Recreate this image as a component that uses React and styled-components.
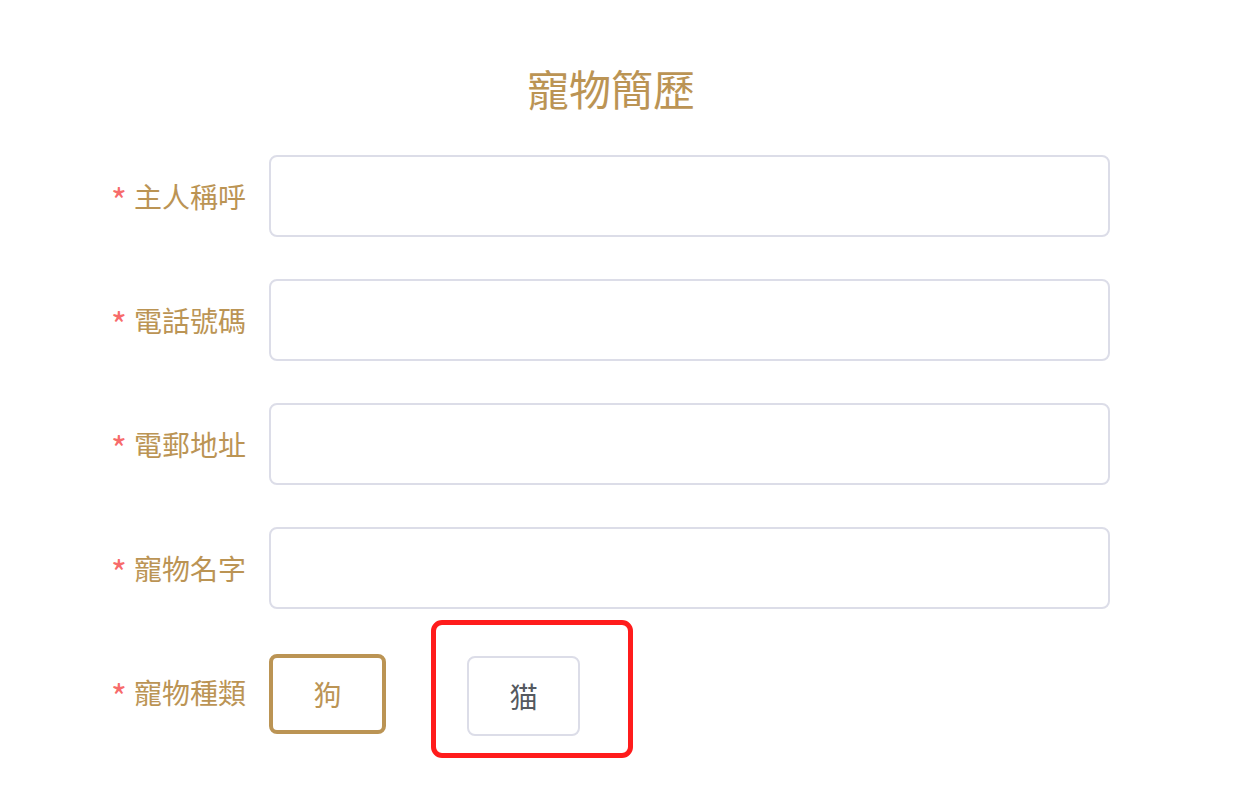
import styled, { createGlobalStyle } from 'styled-components';

const GlobalStyle = createGlobalStyle`
body{
    margin:0;
    background:#ffffff;
    font-family:"Noto Sans CJK TC","Noto Sans",sans-serif;
}
`;

const Page = styled.main`
width:1222px;
min-height:100vh;
box-sizing:border-box;
padding-top:60px;
padding-bottom:40px;
`;

const Title = styled.h1`
margin:0 0 39px 0;
text-align:center;
font-size:42px;
line-height:56px;
font-weight:400;
color:#bb9454;
`;

const Form = styled.form`
display:flex;
flex-direction:column;
gap:42px;
`;

const Row = styled.div`
display:flex;
align-items:${props => props.$top ? 'flex-start' : 'center'};
`;

const Label = styled.label`
width:269px;
height:82px;
box-sizing:border-box;
padding-right:23px;
text-align:right;
font-size:28px;
line-height:82px;
color:#bb9454;
`;

const Star = styled.span`
color:#f76b6b;
font-size:34px;
line-height:0;
vertical-align:-6px;
margin-right:7px;
`;

const Input = styled.input`
width:841px;
height:82px;
box-sizing:border-box;
border:2px solid #dcdde8;
border-radius:8px;
background:#ffffff;
outline:none;
font-size:28px;
padding:0 30px;
`;

const Options = styled.div`
display:flex;
align-items:flex-start;
gap:81px;
`;

const Choice = styled.button`
box-sizing:border-box;
width:${props => props.$active ? '117px' : '113px'};
height:80px;
margin-top:${props => props.$active ? '3px' : '5px'};
border:${props => props.$active ? '4px solid #bb9454' : '2px solid #dcdde8'};
border-radius:8px;
background:#ffffff;
font-family:inherit;
font-size:28px;
color:${props => props.$active ? '#bb9454' : '#55595f'};
cursor:pointer;
`;

const Marked = styled.div`
position:relative;
display:flex;
`;

const Highlight = styled.div`
position:absolute;
left:-36px;
top:-31px;
right:-53px;
bottom:-22px;
border:5px solid #ff1c1c;
border-radius:11px;
pointer-events:none;
`;

const fields = ['主人稱呼', '電話號碼', '電郵地址', '寵物名字'];

export default function App() {
    return (
        <>
            <GlobalStyle />
            <Page>
                <Title>寵物簡歷</Title>
                <Form>
                    {fields.map(f => (
                        <Row key={f}>
                            <Label><Star>*</Star>{f}</Label>
                            <Input type="text" />
                        </Row>
                    ))}
                    <Row $top>
                        <Label><Star>*</Star>寵物種類</Label>
                        <Options>
                            <Choice type="button" $active>狗</Choice>
                            <Marked>
                                <Choice type="button">猫</Choice>
                                <Highlight />
                            </Marked>
                        </Options>
                    </Row>
                </Form>
            </Page>
        </>
    )
}
